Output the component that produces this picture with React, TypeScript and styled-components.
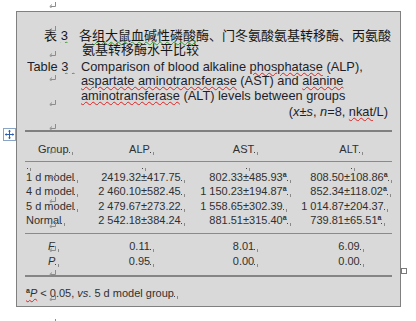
import React from 'react';
import styled, { createGlobalStyle } from 'styled-components';

const GlobalStyle = createGlobalStyle`
  html, body {
    margin: 0;
    padding: 0;
    background: #ffffff;
  }
  body {
    font-family: "Liberation Sans", Arial, sans-serif;
    color: #2a2a2a;
  }
`;

/* ------------------------------- Page & frame ------------------------------ */

const Page = styled.div`
  position: relative;
  width: 416px;
  height: 321px;
  padding: 11px 0 0 16px;
  box-sizing: border-box;
  overflow: hidden;
`;

const Frame = styled.div`
  position: relative;
  width: 385px;
  height: 296px;
  box-sizing: border-box;
  border: 1px solid #808080;
  background: #d9d9d9;
  padding: 17px 8px 0 8px;
`;

/* ---------------------------------- Title --------------------------------- */

const CnTitle = styled.div`
  display: grid;
  grid-template-columns: 35px 1fr;
  padding-left: 19px;
  font: 13px/13.5px "Liberation Sans", "Noto Sans CJK SC", sans-serif;
  color: #151515;
`;

const EnTitle = styled.div`
  display: grid;
  grid-template-columns: 54px 1fr;
  padding-left: 2px;
  margin-top: 3.5px;
  font: 12.8px/14.5px "Liberation Sans", Arial, sans-serif;
  color: #1e1e2a;
`;

const Label = styled.span`
  white-space: pre;
  overflow: hidden;
`;

const Line = styled.div<{ $indent?: number }>`
  grid-column: 2;
  white-space: nowrap;
  padding-left: ${(p) => p.$indent || 0}px;
`;

const UnitLine = styled.div`
  grid-column: 1 / span 2;
  text-align: right;
  padding-right: 4px;
  margin-top: 1.5px;
  white-space: nowrap;
`;

const Wavy = styled.span<{ $color: string }>`
  text-decoration: underline wavy ${(p) => p.$color};
  text-decoration-thickness: 1px;
  text-underline-offset: 1px;
  white-space: pre;
`;

/* ---------------------------------- Table --------------------------------- */

const Table = styled.div`
  margin-top: 11px;
  border-top: 2px solid #808080;
  font: 11px/14.6px "Liberation Sans", Arial, sans-serif;
  color: #303030;
`;

const Row = styled.div`
  display: grid;
  grid-template-columns: 62px 105px 103px 97px;
`;

const Head = styled(Row)`
  padding: 10px 0 4px;
  border-bottom: 1px solid #8a8a8a;
`;

const MarkRow = styled(Row)`
  height: 8px;
  line-height: 6px;
`;

const Body = styled.div`
  padding-bottom: 5.5px;
  border-bottom: 1px solid #8a8a8a;
`;

const Stats = styled.div`
  padding: 4.5px 0 6.8px;
  border-bottom: 2px solid #858585;
`;

const Footnote = styled.div`
  padding-top: 9px;
  padding-left: 1px;
  white-space: nowrap;
`;

const Cell = styled.div<{ $center?: boolean; $pad?: number }>`
  text-align: ${(p) => (p.$center ? 'center' : 'left')};
  padding-left: ${(p) => p.$pad || 0}px;
  white-space: nowrap;
`;

const Value = styled.div<{ $tab: number }>`
  display: grid;
  grid-template-columns: ${(p) => p.$tab}px auto;
  white-space: nowrap;
`;

const Mean = styled.span`
  text-align: right;
`;

const Sup = styled.sup`
  font-size: 7px;
  font-weight: bold;
  vertical-align: 4px;
  line-height: 0;
`;

const EndSvg = styled.svg`
  display: inline-block;
  width: 6px;
  height: 6px;
  margin-right: -6px;
  vertical-align: -2px;
`;

const CellEnd = () => (
  <EndSvg viewBox="0 0 6 6">
    <rect x="0" y="3" width="1" height="1" fill="#444" />
    <rect x="3" y="3" width="1" height="3" fill="#8a8a8a" />
  </EndSvg>
);

/* --------------------------------- Overlays -------------------------------- */

const MarkLayer = styled.div`
  position: absolute;
  top: 2px;
  left: 49px;
  display: flex;
  flex-direction: column;
  gap: 18.4px;
  pointer-events: none;
`;

const ReturnSvg = styled.svg`
  display: block;
  width: 7px;
  height: 6px;
`;

const ReturnMark = () => (
  <ReturnSvg viewBox="0 0 7 6">
    <path d="M6.5 0 V4.5 H1.5" fill="none" stroke="#8c8c8c" strokeWidth="1" />
    <path d="M3 2.5 L0.8 4.5 L3 6.5" fill="none" stroke="#8c8c8c" strokeWidth="1" />
  </ReturnSvg>
);

const MoveHandle = styled.svg`
  position: absolute;
  left: 3px;
  top: 128px;
  width: 13px;
  height: 13px;
`;

const Anchor = styled.div`
  position: absolute;
  left: 401px;
  top: 268px;
  width: 4px;
  height: 4px;
  background: #ffffff;
  border: 1px solid #7a7a7a;
`;

/* ---------------------------------- Data ---------------------------------- */

type Group = { name: string; alp: [string, string, boolean]; ast: [string, string, boolean]; alt: [string, string, boolean] };

const groups: Group[] = [
  { name: '1 d model', alp: ['2419.32', '417.75', false], ast: ['802.33', '485.93', true], alt: ['808.50', '108.86', true] },
  { name: '4 d model', alp: ['2 460.10', '582.45', false], ast: ['1 150.23', '194.87', true], alt: ['852.34', '118.02', true] },
  { name: '5 d model', alp: ['2 479.67', '273.22', false], ast: ['1 558.65', '302.39', false], alt: ['1 014.87', '204.37', false] },
  { name: 'Normal', alp: ['2 542.18', '384.24', false], ast: ['881.51', '315.40', true], alt: ['739.81', '65.51', true] },
];

const stats = [
  { label: 'F', values: ['0.11', '8.01', '6.09'] },
  { label: 'P', values: ['0.95', '0.00', '0.00'] },
];

const tabs = [54, 51, 49];

const ValueCell = ({ v, tab }: { v: [string, string, boolean]; tab: number }) => (
  <Value $tab={tab}>
    <Mean>{v[0]}</Mean>
    <span>
      ±{v[1]}
      {v[2] && <Sup>a</Sup>}
      <CellEnd />
    </span>
  </Value>
);

const App = () => {
  return (
    <>
      <GlobalStyle />
      <Page>
        <Frame>
          <CnTitle>
            <Label>
              表 <Wavy $color="#3a9a3a">3</Wavy>
            </Label>
            <Line>
              各<Wavy $color="#3a9a3a">组大鼠血碱性磷酸</Wavy>酶、门冬氨酸氨基转移酶、丙氨酸
            </Line>
            <Line $indent={3}>氨基转移酶水平比较</Line>
          </CnTitle>

          <EnTitle>
            <Label>
              Table <Wavy $color="#3a9a3a">3  </Wavy>
            </Label>
            <Line>
              Comparison of blood alkaline <Wavy $color="#e02020">phosphatase</Wavy> (ALP),
            </Line>
            <Line>
              <Wavy $color="#e02020">aspartate aminotransferase</Wavy> (AST) and{' '}
              <Wavy $color="#e02020">alanine</Wavy>
            </Line>
            <Line>
              <Wavy $color="#e02020">aminotransferase</Wavy> (ALT) levels between groups
            </Line>
            <UnitLine>
              (<i>x</i>±<i>s</i>, <i>n</i>=8, <Wavy $color="#e02020">nkat</Wavy>/L)
            </UnitLine>
          </EnTitle>

          <Table>
            <Head>
              <Cell $pad={13}>
                Group
                <CellEnd />
              </Cell>
              <Cell $center>
                ALP
                <CellEnd />
              </Cell>
              <Cell $center>
                AST
                <CellEnd />
              </Cell>
              <Cell $center $pad={11}>
                ALT
                <CellEnd />
              </Cell>
            </Head>

            <MarkRow>
              <Cell $pad={2}>
                <CellEnd />
              </Cell>
              <Cell $center $pad={4}>
                <CellEnd />
              </Cell>
              <Cell $center $pad={4}>
                <CellEnd />
              </Cell>
              <Cell $center $pad={14}>
                <CellEnd />
              </Cell>
            </MarkRow>

            <Body>
              {groups.map((g) => (
                <Row key={g.name}>
                  <Cell $pad={1}>
                    {g.name}
                    <CellEnd />
                  </Cell>
                  <ValueCell v={g.alp} tab={tabs[0]} />
                  <ValueCell v={g.ast} tab={tabs[1]} />
                  <ValueCell v={g.alt} tab={tabs[2]} />
                </Row>
              ))}
            </Body>

            <Stats>
              {stats.map((s) => (
                <Row key={s.label}>
                  <Cell $pad={23}>
                    <i>{s.label}</i>
                    <CellEnd />
                  </Cell>
                  {s.values.map((v, i) => (
                    <Cell key={i} $center $pad={i === 2 ? 11 : 0}>
                      {v}
                      <CellEnd />
                    </Cell>
                  ))}
                </Row>
              ))}
            </Stats>

            <Footnote>
              <Wavy $color="#e02020">
                <Sup>a</Sup>
                <i>P</i>
              </Wavy>{' '}
              &lt; 0.05, <i>vs</i>. 5 d model group
              <CellEnd />
            </Footnote>
          </Table>
        </Frame>

        <MoveHandle viewBox="0 0 13 13">
          <rect x="0.5" y="0.5" width="12" height="12" fill="#ffffff" stroke="#8aa4c8" />
          <path d="M6.5 2.5 V10.5 M2.5 6.5 H10.5" stroke="#2f5fb3" strokeWidth="1" />
          <path d="M6.5 1.8 L5 3.6 H8 Z M6.5 11.2 L5 9.4 H8 Z M1.8 6.5 L3.6 5 V8 Z M11.2 6.5 L9.4 5 V8 Z" fill="#2f5fb3" />
        </MoveHandle>
        <Anchor />

        <MarkLayer>
          {Array.from({ length: 14 }).map((_, i) => (
            <ReturnMark key={i} />
          ))}
        </MarkLayer>
      </Page>
    </>
  );
};

export default App;
